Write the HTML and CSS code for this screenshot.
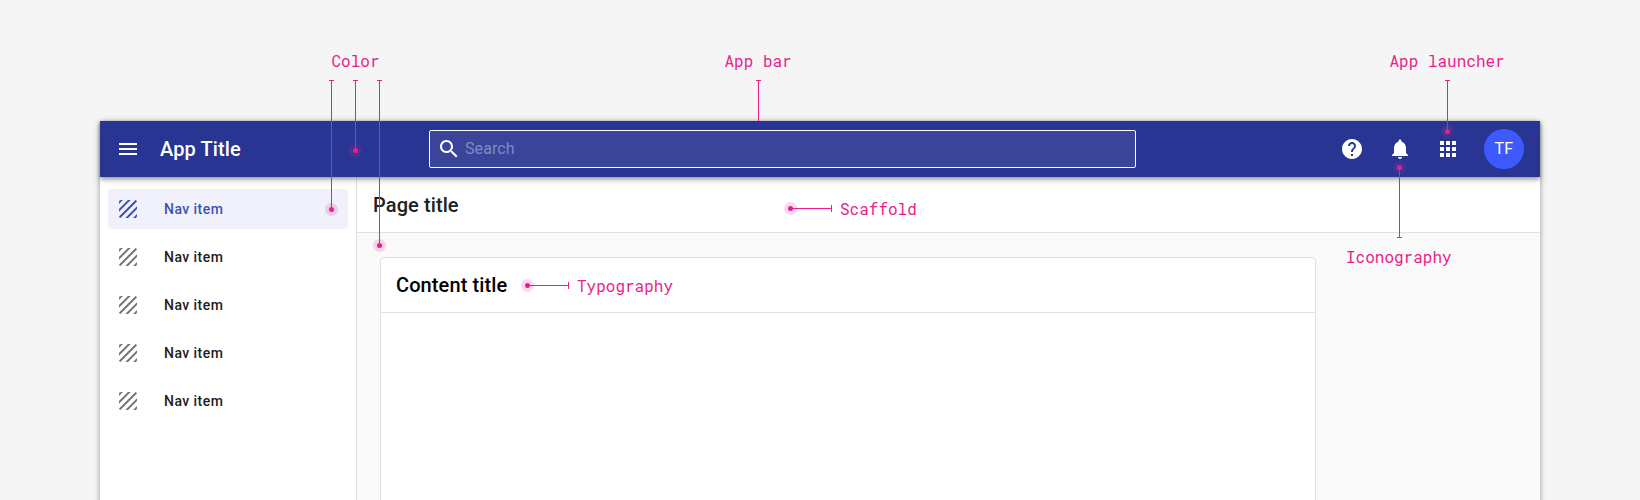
FILE: index.html
```html
<!DOCTYPE html>
<html lang="en">
<head>
<meta charset="utf-8">
<title>App Title</title>
<link rel="stylesheet" href="styles.css">
</head>
<body>
<svg class="defs" width="0" height="0">
  <symbol id="texture" viewBox="3 3 18 18"><path d="M19.51 3.08 3.08 19.51c.09.34.27.65.51.9.25.24.56.42.9.51L20.93 4.49c-.19-.69-.73-1.23-1.42-1.41zM11.88 3 3 11.88v2.83L14.71 3h-2.83zM5 3c-1.1 0-2 .9-2 2v2l4-4H5zm14 18c.55 0 1.05-.22 1.41-.59.37-.36.59-.86.59-1.41v-2l-4 4h2zm-9.71 0h2.83L21 12.12V9.29L9.29 21z"/></symbol>
</svg>
<div class="stage">
  <div class="app">
    <header class="app-bar">
      <svg class="icon menu" viewBox="0 0 24 24"><path d="M3 18h18v-2H3v2zm0-5h18v-2H3v2zm0-7v2h18V6H3z"/></svg>
      <span class="app-title">App Title</span>
      <div class="search">
        <svg class="icon" viewBox="0 0 24 24"><path d="M15.5 14h-.79l-.28-.27C15.41 12.59 16 11.11 16 9.5 16 5.91 13.09 3 9.5 3S3 5.91 3 9.5 5.91 16 9.5 16c1.61 0 3.09-.59 4.23-1.57l.27.28v.79l5 4.99L20.49 19l-4.99-5zm-6 0C7.01 14 5 11.99 5 9.5S7.01 5 9.5 5 14 7.01 14 9.5 11.99 14 9.5 14z"/></svg>
        <span>Search</span>
      </div>
      <div class="actions">
        <svg class="icon" viewBox="0 0 24 24"><path d="M12 2C6.48 2 2 6.48 2 12s4.48 10 10 10 10-4.48 10-10S17.52 2 12 2zm1 17h-2v-2h2v2zm2.07-7.75-.9.92C13.45 12.9 13 13.5 13 15h-2v-.5c0-1.1.45-2.1 1.17-2.83l1.24-1.26c.37-.36.59-.86.59-1.41 0-1.1-.9-2-2-2s-2 .9-2 2H8c0-2.21 1.79-4 4-4s4 1.79 4 4c0 .88-.36 1.68-.93 2.25z"/></svg>
        <svg class="icon" viewBox="0 0 24 24"><path d="M12 22c1.1 0 2-.9 2-2h-4c0 1.1.89 2 2 2zm6-6v-5c0-3.07-1.64-5.64-4.5-6.32V4c0-.83-.67-1.5-1.5-1.5s-1.5.67-1.5 1.5v.68C7.63 5.36 6 7.92 6 11v5l-2 2v1h16v-1l-2-2z"/></svg>
        <svg class="icon" viewBox="0 0 24 24"><path d="M4 8h4V4H4v4zm6 12h4v-4h-4v4zm-6 0h4v-4H4v4zm0-6h4v-4H4v4zm6 0h4v-4h-4v4zm6-10v4h4V4h-4zm-6 4h4V4h-4v4zm6 6h4v-4h-4v4zm0 6h4v-4h-4v4z"/></svg>
      </div>
      <span class="avatar">TF</span>
    </header>
    <div class="body">
      <nav class="side-nav">
        <a class="nav-item selected"><svg><use href="#texture"/></svg><span>Nav item</span></a>
        <a class="nav-item"><svg><use href="#texture"/></svg><span>Nav item</span></a>
        <a class="nav-item"><svg><use href="#texture"/></svg><span>Nav item</span></a>
        <a class="nav-item"><svg><use href="#texture"/></svg><span>Nav item</span></a>
        <a class="nav-item"><svg><use href="#texture"/></svg><span>Nav item</span></a>
      </nav>
      <main class="main">
        <h1 class="page-title">Page title</h1>
        <section class="card">
          <h2 class="card-title">Content title</h2>
        </section>
      </main>
    </div>
  </div>

  <svg class="callouts" viewBox="0 0 1640 500">
    <g class="halos">
      <circle cx="331.5" cy="209.5" r="6.5"/><circle cx="355.5" cy="150.5" r="6.5"/><circle cx="379.5" cy="245.5" r="6.5"/>
      <circle cx="790.5" cy="208.5" r="6.5"/><circle cx="527.5" cy="285.5" r="6.5"/>
      <circle cx="1447.5" cy="131.5" r="6.5"/><circle cx="1399.5" cy="167.5" r="6.5"/>
    </g>
    <g class="dots">
      <circle cx="331.5" cy="209.5" r="2.5"/><circle cx="355.5" cy="150.5" r="2.5"/><circle cx="379.5" cy="245.5" r="2.5"/>
      <circle cx="790.5" cy="208.5" r="2.5"/><circle cx="527.5" cy="285.5" r="2.5"/>
      <circle cx="1447.5" cy="131.5" r="2.5"/><circle cx="1399.5" cy="167.5" r="2.5"/>
    </g>
    <path class="leaders" d="M329 80.5h5M331.5 80v129M353 80.5h5M355.5 80v70M377 80.5h5M379.5 80v165M756 80.5h5M758.5 80v41M1445 80.5h5M1447.5 80v51M1397 237.5h5M1399.5 238v-70M790 208.5h42M831.5 205v7M527 285.5h42M568.5 282v7"/>
  </svg>
  <span class="label color">Color</span>
  <span class="label app-bar-label">App bar</span>
  <span class="label launcher">App launcher</span>
  <span class="label scaffold">Scaffold</span>
  <span class="label typography">Typography</span>
  <span class="label iconography">Iconography</span>
</div>
</body>
</html>
```
FILE: styles.css
```css
* { box-sizing: border-box; }
body { margin: 0; background: #f5f5f5; font-family: Roboto, sans-serif; }
.defs { position: absolute; }
.stage { position: relative; height: 500px; padding: 121px 100px 0; overflow: hidden; }
.app { height: 420px; background: #fff; box-shadow: 0 1px 5px rgba(0,0,0,.35), 0 0 12px rgba(0,0,0,.06); }
.app-bar {
  position: relative; z-index: 1;
  display: flex; align-items: center;
  height: 56px; padding: 0 16px;
  background: #283593; color: #fff;
  box-shadow: 0 2px 4px rgba(0,0,0,.35), 0 4px 8px rgba(0,0,0,.1);
}
.icon { width: 24px; height: 24px; fill: currentColor; flex: none; display: block; }
.app-title { width: 269px; margin-left: 20px; font-size: 20px; font-weight: 500; letter-spacing: .12px; }
.search {
  display: flex; align-items: center; gap: 4px;
  width: 707px; height: 38px; padding-left: 7px;
  border: 1px solid #fff; border-radius: 2px; background: #3a4599;
  font-size: 16px; color: #8089c4;
}
.search .icon { color: #fff; }
.search span { padding-bottom: 2px; letter-spacing: .1px; }
.actions { display: flex; gap: 24px; margin-left: 204px; }
.avatar {
  display: grid; place-items: center;
  width: 40px; height: 40px; margin-left: 24px; padding-bottom: 2px;
  border-radius: 50%; background: #3d5afe; font-size: 16px; letter-spacing: .2px;
}
.body { display: flex; height: 364px; }
.side-nav {
  display: flex; flex-direction: column; gap: 8px; flex: none;
  width: 257px; padding: 12px 8px; border-right: 1px solid #e0e0e0;
}
.nav-item {
  display: flex; align-items: center; gap: 27px;
  height: 40px; padding-left: 11px; border-radius: 4px;
  color: #212121; font-size: 14px; font-weight: 500; letter-spacing: .45px;
}
.nav-item svg { width: 18px; height: 18px; fill: #757575; }
.nav-item.selected { background: #f0f1fa; color: #3f51b5; }
.nav-item.selected svg { fill: #3f51b5; }
.main { flex: 1; background: #fafafa; }
.page-title {
  height: 56px; margin: 0; padding-left: 16px;
  border-bottom: 1px solid #e0e0e0; background: #fff;
  color: #212121; font-size: 20px; font-weight: 500; line-height: 56px; letter-spacing: .1px;
}
.card {
  width: 936px; height: 300px; margin: 24px 0 0 23px;
  border: 1px solid #e0e0e0; border-radius: 4px; background: #fff;
}
.card-title {
  height: 55px; margin: 0; padding-left: 15px;
  border-bottom: 1px solid #e0e0e0;
  color: #000; font-size: 20px; font-weight: 500; line-height: 55px; letter-spacing: .1px;
}
.callouts { position: absolute; z-index: 2; left: 0; top: 0; width: 1640px; height: 500px; }
.halos { fill: #e91e8c; opacity: .17; }
.dots { fill: #e91e8c; }
.leaders { fill: none; stroke: #e91e8c; stroke-width: 1; }
.label {
  position: absolute; z-index: 3; color: #e91e8c; white-space: pre;
  font: 16px/20px "Roboto Mono", "DejaVu Sans Mono", monospace;
}
.color { left: 331.5px; top: 51px; }
.app-bar-label { left: 724.5px; top: 51px; }
.launcher { left: 1389.5px; top: 51px; }
.scaffold { left: 840px; top: 199px; }
.typography { left: 577px; top: 276px; }
.iconography { left: 1346px; top: 247px; }
```
